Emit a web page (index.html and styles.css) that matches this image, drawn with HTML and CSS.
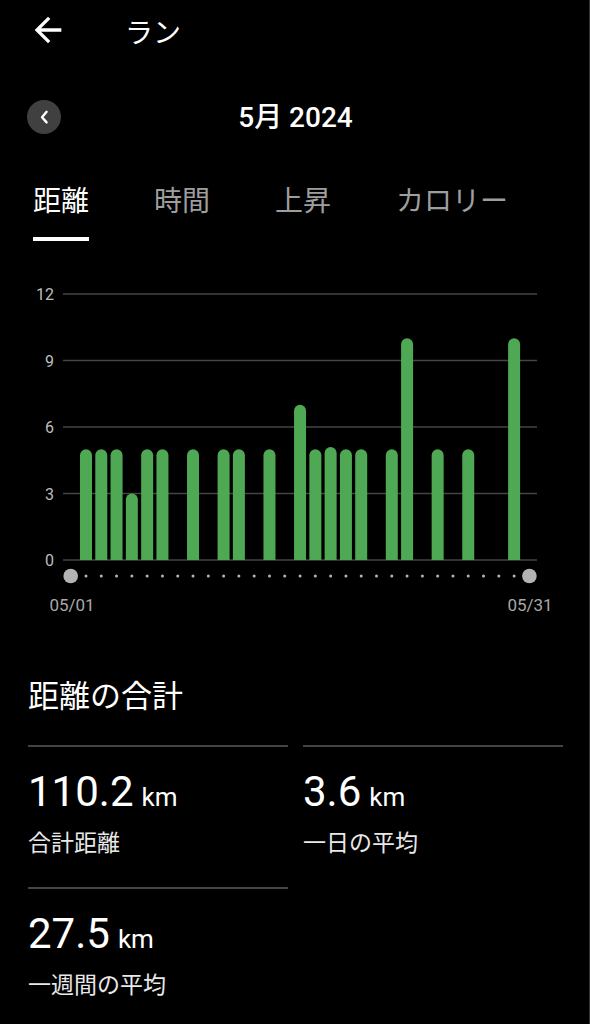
FILE: index.html
```html
<!DOCTYPE html>
<html lang="ja">
<head>
    <meta charset="UTF-8">
    <meta name="viewport" content="width=device-width, initial-scale=1.0">
    <title>ラン</title>
    <link rel="stylesheet" href="styles.css">
</head>
<body>

    <header class="top-bar">
        <svg class="back-icon" viewBox="0 0 24 24" width="40" height="40">
            <path d="M20 11H7.83l5.59-5.59L12 4l-8 8 8 8 1.41-1.41L7.83 13H20v-2z" fill="#fff"/>
        </svg>
        <h1 class="page-title">ラン</h1>
    </header>

    <div class="month-row">
        <button class="month-prev" type="button">
            <svg viewBox="0 0 34 34" width="34" height="34">
                <path d="M19.6 11.8L15 17.2l4.6 5.2" fill="none" stroke="#fff" stroke-width="2.4" stroke-linecap="round" stroke-linejoin="round"/>
            </svg>
        </button>
        <div class="month-label">5月 2024</div>
    </div>

    <nav class="tabs">
        <div class="tab active">距離</div>
        <div class="tab">時間</div>
        <div class="tab">上昇</div>
        <div class="tab">カロリー</div>
    </nav>

    <div class="chart">
        <svg id="chart" viewBox="0 0 590 340" width="590" height="340">
            <g id="grid"></g>
            <g id="bars"></g>
            <g id="days"></g>
            <text class="date-label" x="72" y="331">05/01</text>
            <text class="date-label" x="530" y="331">05/31</text>
        </svg>
    </div>

    <section class="summary">
        <h2 class="summary-title">距離の合計</h2>
        <div class="stats">
            <div class="stat">
                <div class="stat-value">110.2<span class="unit">km</span></div>
                <div class="stat-label">合計距離</div>
            </div>
            <div class="stat">
                <div class="stat-value">3.6<span class="unit">km</span></div>
                <div class="stat-label">一日の平均</div>
            </div>
            <div class="stat">
                <div class="stat-value">27.5<span class="unit">km</span></div>
                <div class="stat-label">一週間の平均</div>
            </div>
        </div>
    </section>

    <script>
        // Distance per day of May (index 0 = 05/01)
        const distances = [0, 5, 5, 5, 3, 5, 5, 0, 5, 0, 5, 5, 0, 5, 0, 7, 5, 5.1, 5, 5, 0, 5, 10, 0, 5, 0, 5, 0, 0, 10, 0];

        const NS = 'http://www.w3.org/2000/svg';
        const baseY = 280;        // zero line
        const unit = 266 / 12;    // px per km
        const firstX = 70.7;
        const step = 15.29;

        function el(name, attrs) {
            const node = document.createElementNS(NS, name);
            for (const key in attrs) {
                node.setAttribute(key, attrs[key]);
            }
            return node;
        }

        // Grid lines and y labels
        const grid = document.getElementById('grid');
        [0, 3, 6, 9, 12].forEach(function(v) {
            const y = baseY - v * unit;
            grid.appendChild(el('line', { x1: 63, x2: 537, y1: y, y2: y, class: 'grid-line' }));
            const label = el('text', { x: 54, y: y + 6, class: 'axis-label' });
            label.textContent = v;
            grid.appendChild(label);
        });

        // Bars with a rounded top
        const bars = document.getElementById('bars');
        distances.forEach(function(d, i) {
            if (!d) return;
            const x = firstX + i * step;
            const top = baseY - d * unit;
            const path = 'M' + (x - 6) + ' ' + baseY +
                ' V' + (top + 6) +
                ' A6 6 0 0 1 ' + (x + 6) + ' ' + (top + 6) +
                ' V' + baseY + ' Z';
            bars.appendChild(el('path', { d: path, class: 'bar' }));
        });

        // Day dots under the axis
        const days = document.getElementById('days');
        distances.forEach(function(d, i) {
            const edge = i === 0 || i === distances.length - 1;
            days.appendChild(el('circle', {
                cx: firstX + i * step,
                cy: 296,
                r: edge ? 7.3 : 1.5,
                class: edge ? 'day-end' : 'day-dot'
            }));
        });
    </script>

</body>
</html>
```

FILE: styles.css
```css
body {
    margin: 0;
    background-color: #000;
    color: #fff;
    font-family: Roboto, "Noto Sans CJK JP", sans-serif;
    box-shadow: inset -1px 0 #333;
    min-height: 100vh;
}
.top-bar {
    height: 60px;
    display: flex;
    align-items: center;
    padding-left: 28px;
}
.back-icon {
    display: block;
}
.page-title {
    margin: 7px 0 0 57px;
    font-size: 28px;
    font-weight: normal;
    line-height: 40px;
}
.month-row {
    margin-top: 32px;
    height: 48px;
    display: grid;
    grid-template-columns: 1fr auto 1fr;
    align-items: center;
    padding: 0 27px;
}
.month-prev {
    width: 34px;
    height: 34px;
    padding: 0;
    border: none;
    border-radius: 50%;
    background-color: #404040;
}
.month-prev svg {
    display: block;
}
.month-label {
    font-size: 28px;
    font-weight: 500;
    line-height: 48px;
    margin: 2px 0 0 1px;
}
.tabs {
    margin-top: 42px;
    display: flex;
    gap: 65px;
    padding-left: 33px;
}
.tab {
    font-size: 28px;
    line-height: 40px;
    color: #9e9e9e;
    padding-bottom: 15px;
    border-bottom: 4px solid transparent;
}
.tab.active {
    color: #fff;
    border-bottom-color: #fff;
}
.chart {
    margin-top: 39px;
}
.chart svg {
    display: block;
}
.grid-line {
    stroke: #454545;
    stroke-width: 1.6;
}
.axis-label {
    fill: #bdbdbd;
    font-size: 16px;
    text-anchor: end;
}
.bar {
    fill: #4fa853;
}
.day-dot {
    fill: #b5b5b5;
}
.day-end {
    fill: #b3b3b3;
}
.date-label {
    fill: #a8a8a8;
    font-size: 17px;
    text-anchor: middle;
}
.summary {
    margin-top: 57px;
    padding: 0 27px 0 28px;
}
.summary-title {
    margin: 0 0 28px;
    font-size: 31px;
    font-weight: normal;
    line-height: 40px;
}
.stats {
    display: grid;
    grid-template-columns: 1fr 1fr;
    column-gap: 15px;
}
.stat {
    border-top: 2px solid #444;
    padding: 20px 0 28px;
}
.stat-value {
    font-size: 42px;
    line-height: 50px;
}
.unit {
    font-size: 26px;
    line-height: 1;
    margin-left: 8px;
}
.stat-label {
    margin-top: 12px;
    font-size: 23px;
    line-height: 30px;
    color: #e8e8e8;
}
```
